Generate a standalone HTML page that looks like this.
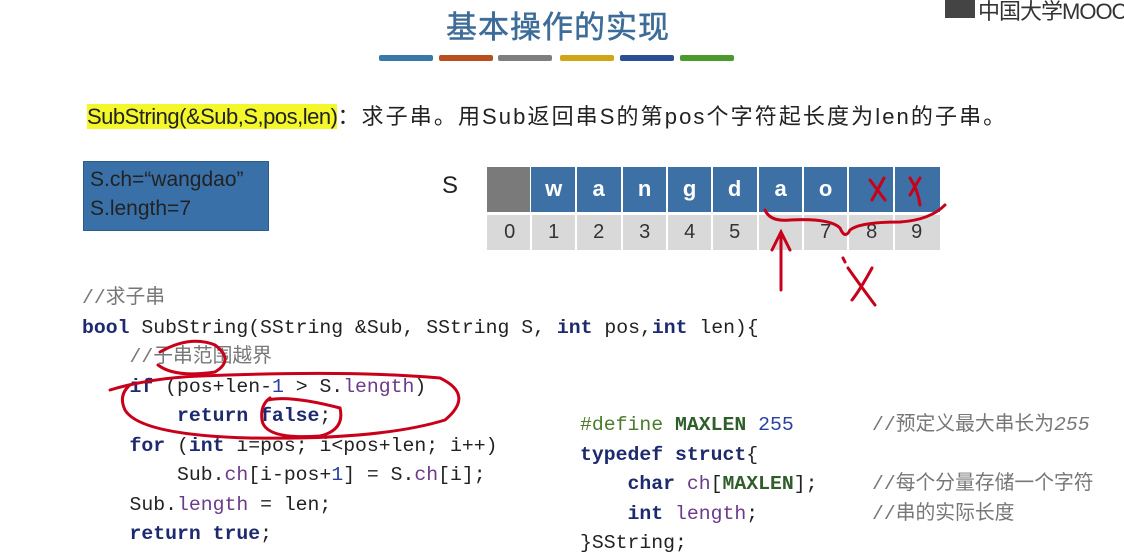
<!DOCTYPE html>
<html><head><meta charset="utf-8"><style>
*{margin:0;padding:0;box-sizing:border-box}
body{width:1124px;height:553px;background:#fff;position:relative;overflow:hidden;font-family:"Liberation Sans","Noto Sans CJK SC",sans-serif}
.a{position:absolute;white-space:pre}
.bar{position:absolute;top:55px;height:6px;border-radius:2px;width:54px}
.code{font-family:"Liberation Mono","Noto Sans CJK SC",monospace;font-size:19.8px;color:#222;line-height:29.5px}
.k{color:#1e2a6e;font-weight:bold}
.f{color:#6b3b8a}
.n{color:#2a3fa0}
.c{color:#777}
.m{color:#2f5e2a;font-weight:bold}
.cell{position:absolute;width:45.3px;text-align:center;color:#fff;font-size:22px;font-weight:bold}
.num{position:absolute;width:45.3px;text-align:center;color:#333;font-size:20px}
</style></head><body>
<div class="a" style="left:446px;top:2px;font-size:31px;color:#3d6c98;letter-spacing:1px;-webkit-text-stroke:0.5px #3d6c98">基本操作的实现</div>
<div class="a" style="left:945px;top:-4px;width:30px;height:22px;background:#444"></div>
<div class="a" style="left:978px;top:-6px;font-size:22px;color:#333;letter-spacing:-1px">中国大学MOOC</div>
<div class="bar" style="left:379px;background:#3a78a8"></div>
<div class="bar" style="left:439px;background:#b84f1c"></div>
<div class="bar" style="left:498px;background:#7f7f7f"></div>
<div class="bar" style="left:560px;background:#d0a617"></div>
<div class="bar" style="left:620px;background:#2a4f95"></div>
<div class="bar" style="left:680px;background:#4a9a2e"></div>

<div class="a" style="left:87px;top:99px;font-size:22px;color:#222"><span style="background:#f4f72a;letter-spacing:-0.5px">SubString(&amp;Sub,S,pos,len)</span><span style="letter-spacing:2.1px">：求子串。用Sub返回串S的第pos个字符起长度为len的子串。</span></div>

<div class="a" style="left:83px;top:161px;width:186px;height:70px;background:#3a70a8;border:1px solid #2e5c8a"></div>
<div class="a" style="left:90px;top:165px;font-size:21px;color:#222;line-height:29px">S.ch=“wangdao”
S.length=7</div>

<div class="a" style="left:442px;top:172px;font-size:24px;color:#222">S</div>
<div class="a" style="left:487px;top:167px;width:43px;height:45px;background:#7a7a7a"></div>
<div class="a" style="left:531px;top:167px;width:409px;height:45px;background:#3d71a5"></div>
<div class="cell" style="left:531px;top:176px">w</div>
<div class="cell" style="left:576px;top:176px">a</div>
<div class="cell" style="left:622px;top:176px">n</div>
<div class="cell" style="left:667px;top:176px">g</div>
<div class="cell" style="left:712px;top:176px">d</div>
<div class="cell" style="left:758px;top:176px">a</div>
<div class="cell" style="left:803px;top:176px">o</div>
<svg class="a" style="left:531px;top:167px" width="409" height="45">
<g stroke="#fff" stroke-width="2"><line x1="45" y1="0" x2="45" y2="45"/><line x1="91" y1="0" x2="91" y2="45"/><line x1="136" y1="0" x2="136" y2="45"/><line x1="181" y1="0" x2="181" y2="45"/><line x1="227" y1="0" x2="227" y2="45"/><line x1="272" y1="0" x2="272" y2="45"/><line x1="317" y1="0" x2="317" y2="45"/><line x1="363" y1="0" x2="363" y2="45"/></g>
</svg>
<div class="a" style="left:487px;top:215px;height:35px;width:453px;background:#d9d9d9"></div>
<svg class="a" style="left:487px;top:215px" width="453" height="35"><g stroke="#fff" stroke-width="2"><line x1="44" y1="0" x2="44" y2="35"/><line x1="89" y1="0" x2="89" y2="35"/><line x1="135" y1="0" x2="135" y2="35"/><line x1="180" y1="0" x2="180" y2="35"/><line x1="225" y1="0" x2="225" y2="35"/><line x1="271" y1="0" x2="271" y2="35"/><line x1="316" y1="0" x2="316" y2="35"/><line x1="361" y1="0" x2="361" y2="35"/><line x1="407" y1="0" x2="407" y2="35"/></g></svg>
<div class="num" style="left:487px;top:221px">0</div>
<div class="num" style="left:531px;top:221px">1</div>
<div class="num" style="left:576px;top:221px">2</div>
<div class="num" style="left:622px;top:221px">3</div>
<div class="num" style="left:667px;top:221px">4</div>
<div class="num" style="left:712px;top:221px">5</div>
<div class="num" style="left:803px;top:221px">7</div>
<div class="num" style="left:849px;top:221px">8</div>
<div class="num" style="left:894px;top:221px">9</div>

<div class="a code" style="left:82px;top:284px"><span class="c">//求子串</span>
<span class="k">bool</span> SubString(SString &amp;Sub, SString S, <span class="k">int</span> pos,<span class="k">int</span> len){
    <span class="c">//子串范围越界</span>
    <span class="k">if</span> (pos+len-<span class="n">1</span> &gt; S.<span class="f">length</span>)
        <span class="k">return false</span>;
    <span class="k">for</span> (<span class="k">int</span> i=pos; i&lt;pos+len; i++)
        Sub.<span class="f">ch</span>[i-pos+<span class="n">1</span>] = S.<span class="f">ch</span>[i];
    Sub.<span class="f">length</span> = len;
    <span class="k">return true</span>;</div>

<div class="a code" style="left:580px;top:411px"><span style="color:#4a7a2a">#define</span> <span class="m">MAXLEN</span> <span class="n">255</span>
<span class="k">typedef struct</span>{
    <span class="k">char</span> <span class="f">ch</span>[<span class="m">MAXLEN</span>];
    <span class="k">int</span> <span class="f">length</span>;
}SString;</div>
<div class="a code c" style="left:872px;top:411px">//预定义最大串长为<i>255</i>

//每个分量存储一个字符
//串的实际长度</div>

<svg class="a" style="left:0;top:0" width="1124" height="553" fill="none" stroke="#c8001a" stroke-width="3" stroke-linecap="round">
<path d="M870 180 L885 200 M884 178 L872 200"/>
<path d="M910 178 Q918 190 920 205 M920 178 L910 195"/>
<path d="M765 210 Q770 222 790 220 Q830 218 840 228 Q845 240 850 230 Q860 222 900 222 Q930 220 945 205"/>
<path d="M781 290 L781 232 M772 250 L781 232 L790 250"/>
<path d="M843 258 L845 262 M848 268 Q860 285 875 305 M872 268 Q860 290 852 300"/>
<path d="M160 352 Q190 335 215 345 Q235 360 215 372 Q175 378 158 365"/>
<path d="M110 390 Q150 378 200 376 Q350 370 440 378 Q475 395 445 420 Q380 440 250 438 Q140 435 125 410 Q118 395 130 385"/>
<path d="M268 400 Q290 395 340 408 Q345 430 320 436 Q265 440 262 420 Q260 405 270 398"/>
</svg>
</body></html>
